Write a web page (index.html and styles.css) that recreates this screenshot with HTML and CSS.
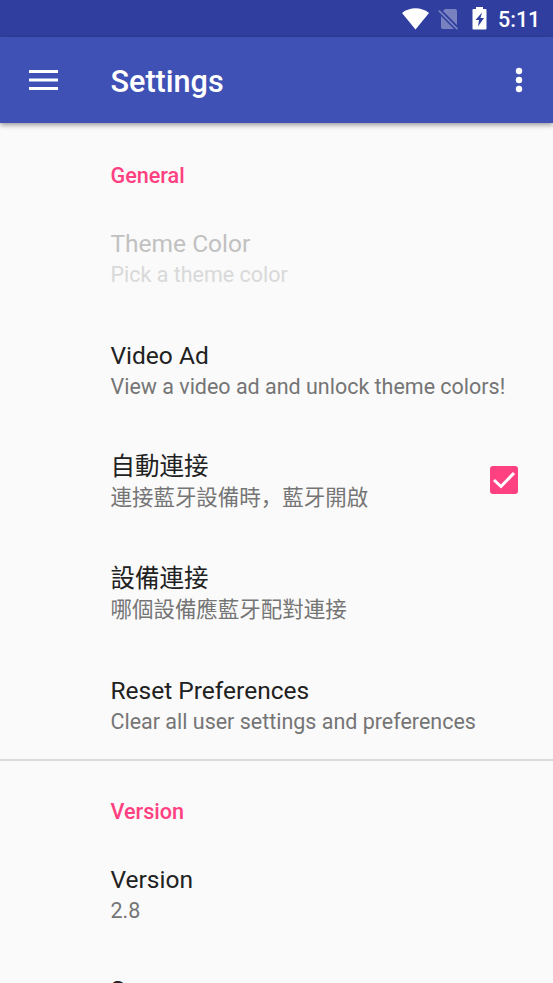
FILE: index.html
```html
<!DOCTYPE html>
<html lang="zh">
<head>
<meta charset="utf-8">
<title>Settings</title>
<link rel="stylesheet" href="styles.css">
</head>
<body>
<div class="status">
  <svg class="wifi" width="28" height="22" viewBox="0 0 28 22"><path d="M13.500 21.500 0 5C8-1.200 19-1.200 27 5Z"/></svg>
  <svg class="nosim" width="21" height="22" viewBox="0 0 21 22"><path d="M7 1h10q2 0 2 2v14L5 3zM1.500 2l18.500 18.500-1.200 1.200L.3 3.200zM3 8l13 13H5q-2 0-2-2z"/></svg>
  <svg class="battery" width="15" height="23" viewBox="0 0 15 23"><path fill-rule="evenodd" d="M4 2V0h7v2h2.500q1 0 1 1v18.500q0 1-1 1h-12q-1 0-1-1V3q0-1 1-1zM10 5.500 3.500 13H7l-1 6.500 6-8.500H8.500z"/></svg>
  <span class="clock">5:11</span>
</div>
<header class="bar">
  <svg class="menu" width="29" height="20" viewBox="0 0 29 20"><path d="M0 0h29v3H0zM0 8.500h29v3H0zM0 17h29v3H0z"/></svg>
  <h1>Settings</h1>
  <svg class="more" width="8" height="26" viewBox="0 0 8 26"><circle cx="4" cy="4" r="3.200"/><circle cx="4" cy="13" r="3.200"/><circle cx="4" cy="22" r="3.200"/></svg>
</header>
<main>
  <section class="group">
    <h2>General</h2>
    <div class="row disabled"><div class="text"><div class="title">Theme Color</div><div class="sub">Pick a theme color</div></div></div>
    <div class="row"><div class="text"><div class="title">Video Ad</div><div class="sub">View a video ad and unlock theme colors!</div></div></div>
    <div class="row"><div class="text"><div class="title">自動連接</div><div class="sub">連接藍牙設備時，藍牙開啟</div></div>
      <svg class="check" width="28" height="28" viewBox="0 0 28 28"><rect width="28" height="28" rx="3"/><path d="m4 14 7 6.500L24 7"/></svg></div>
    <div class="row"><div class="text"><div class="title">設備連接</div><div class="sub">哪個設備應藍牙配對連接</div></div></div>
    <div class="row"><div class="text"><div class="title">Reset Preferences</div><div class="sub">Clear all user settings and preferences</div></div></div>
  </section>
  <section class="group">
    <h2>Version</h2>
    <div class="row"><div class="text"><div class="title">Version</div><div class="sub">2.8</div></div></div>
    <div class="row last"><div class="title">S</div></div>
  </section>
</main>
</body>
</html>
```
FILE: styles.css
```css
* { box-sizing: border-box; }
body {
  margin: 0;
  height: 983px;
  overflow: hidden;
  background: #fafafa;
  font-family: Roboto, "Noto Sans CJK SC", sans-serif;
  color: #212121;
}
svg { display: block; flex: none; }
.status {
  display: flex;
  align-items: center;
  height: 37px;
  padding-left: 402px;
  background: #303f9f;
  color: #fff;
  fill: #fff;
}
.nosim { margin-left: 8px; opacity: .35; }
.battery { margin-left: 13px; }
.clock { margin: 2px 0 0 11px; font-size: 21.500px; font-weight: 500; line-height: 37px; }
.bar {
  display: flex;
  align-items: center;
  height: 86px;
  padding: 0 30px 0 28.500px;
  background: #3f51b5;
  color: #fff;
  fill: #fff;
  box-shadow: 0 2px 5px rgba(0, 0, 0, .4);
}
.menu { margin-bottom: 1px; }
.bar h1 { flex: 1; margin: 3px 0 0 53px; font-size: 30.600px; font-weight: 500; line-height: 40px; }
.group { padding-top: 31px; }
.group + .group { padding-top: 29px; border-top: 2px solid #dadada; }
h2 {
  margin: 0 0 4px 110.500px;
  font-size: 21.600px;
  line-height: 43px;
  font-weight: 500;
  color: #ff4081;
}
.row {
  display: flex;
  align-items: center;
  justify-content: space-between;
  height: 111.600px;
  padding: 0 35px 0 110.500px;
  white-space: nowrap;
}
.text { padding-top: 3px; }
.title { font-size: 24.500px; line-height: 33px; }
.sub { font-size: 21.480px; line-height: 29px; color: #757575; }
.disabled .title { color: #c1c1c1; }
.disabled .sub { color: #d9d9d9; }
.last { padding-bottom: 29px; }
.check { fill: #ff4081; }
.check path { fill: none; stroke: #fff; stroke-width: 3; }
```
